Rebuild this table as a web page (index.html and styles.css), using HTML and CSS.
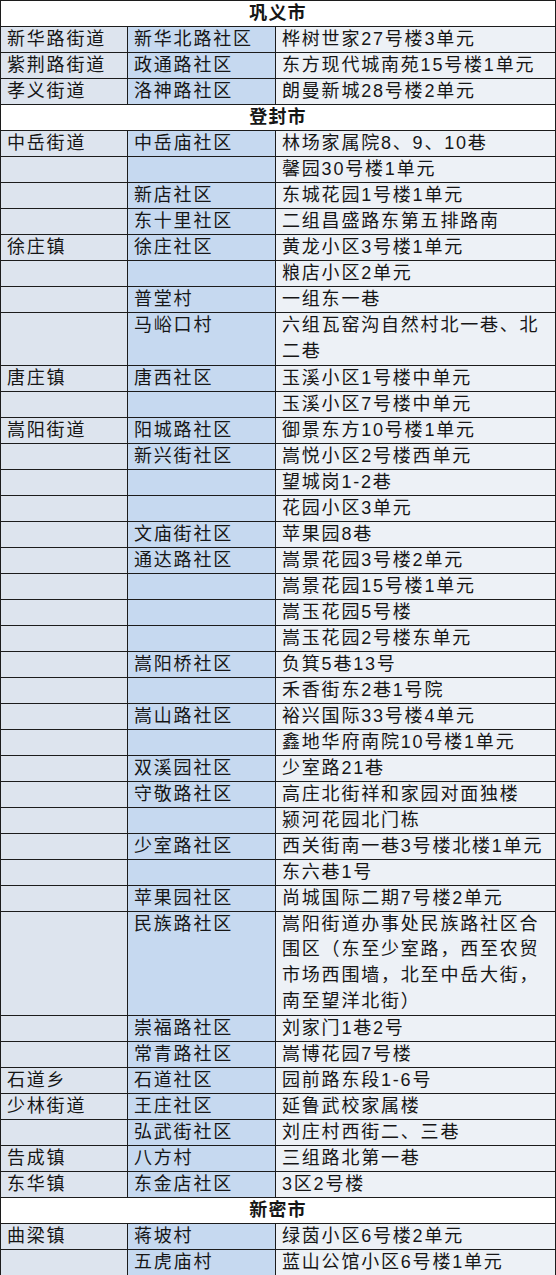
FILE: index.html
```html
<!DOCTYPE html>
<html lang="zh-CN">
<head>
<meta charset="utf-8">
<title>社区名单</title>
<link rel="stylesheet" href="styles.css">
</head>
<body>
<div class="sheet">
  <div class="city">巩义市</div>
  <div class="c1">新华路街道</div><div class="c2">新华北路社区</div><div class="c3">桦树世家27号楼3单元</div>
  <div class="c1">紫荆路街道</div><div class="c2">政通路社区</div><div class="c3">东方现代城南苑15号楼1单元</div>
  <div class="c1">孝义街道</div><div class="c2">洛神路社区</div><div class="c3">朗曼新城28号楼2单元</div>

  <div class="city">登封市</div>
  <div class="c1">中岳街道</div><div class="c2">中岳庙社区</div><div class="c3">林场家属院8、9、10巷</div>
  <div class="c1"></div><div class="c2"></div><div class="c3">馨园30号楼1单元</div>
  <div class="c1"></div><div class="c2">新店社区</div><div class="c3">东城花园1号楼1单元</div>
  <div class="c1"></div><div class="c2">东十里社区</div><div class="c3">二组昌盛路东第五排路南</div>
  <div class="c1">徐庄镇</div><div class="c2">徐庄社区</div><div class="c3">黄龙小区3号楼1单元</div>
  <div class="c1"></div><div class="c2"></div><div class="c3">粮店小区2单元</div>
  <div class="c1"></div><div class="c2">普堂村</div><div class="c3">一组东一巷</div>
  <div class="c1"></div><div class="c2">马峪口村</div><div class="c3 multi">六组瓦窑沟自然村北一巷、北二巷</div>
  <div class="c1">唐庄镇</div><div class="c2">唐西社区</div><div class="c3">玉溪小区1号楼中单元</div>
  <div class="c1"></div><div class="c2"></div><div class="c3">玉溪小区7号楼中单元</div>
  <div class="c1">嵩阳街道</div><div class="c2">阳城路社区</div><div class="c3">御景东方10号楼1单元</div>
  <div class="c1"></div><div class="c2">新兴街社区</div><div class="c3">嵩悦小区2号楼西单元</div>
  <div class="c1"></div><div class="c2"></div><div class="c3">望城岗1-2巷</div>
  <div class="c1"></div><div class="c2"></div><div class="c3">花园小区3单元</div>
  <div class="c1"></div><div class="c2">文庙街社区</div><div class="c3">苹果园8巷</div>
  <div class="c1"></div><div class="c2">通达路社区</div><div class="c3">嵩景花园3号楼2单元</div>
  <div class="c1"></div><div class="c2"></div><div class="c3">嵩景花园15号楼1单元</div>
  <div class="c1"></div><div class="c2"></div><div class="c3">嵩玉花园5号楼</div>
  <div class="c1"></div><div class="c2"></div><div class="c3">嵩玉花园2号楼东单元</div>
  <div class="c1"></div><div class="c2">嵩阳桥社区</div><div class="c3">负箕5巷13号</div>
  <div class="c1"></div><div class="c2"></div><div class="c3">禾香街东2巷1号院</div>
  <div class="c1"></div><div class="c2">嵩山路社区</div><div class="c3">裕兴国际33号楼4单元</div>
  <div class="c1"></div><div class="c2"></div><div class="c3">鑫地华府南院10号楼1单元</div>
  <div class="c1"></div><div class="c2">双溪园社区</div><div class="c3">少室路21巷</div>
  <div class="c1"></div><div class="c2">守敬路社区</div><div class="c3">高庄北街祥和家园对面独楼</div>
  <div class="c1"></div><div class="c2"></div><div class="c3">颍河花园北门栋</div>
  <div class="c1"></div><div class="c2">少室路社区</div><div class="c3">西关街南一巷3号楼北楼1单元</div>
  <div class="c1"></div><div class="c2"></div><div class="c3">东六巷1号</div>
  <div class="c1"></div><div class="c2">苹果园社区</div><div class="c3">尚城国际二期7号楼2单元</div>
  <div class="c1"></div><div class="c2">民族路社区</div><div class="c3 multi">嵩阳街道办事处民族路社区合围区（东至少室路，西至农贸市场西围墙，北至中岳大街，南至望洋北街）</div>
  <div class="c1"></div><div class="c2">崇福路社区</div><div class="c3">刘家门1巷2号</div>
  <div class="c1"></div><div class="c2">常青路社区</div><div class="c3">嵩博花园7号楼</div>
  <div class="c1">石道乡</div><div class="c2">石道社区</div><div class="c3">园前路东段1-6号</div>
  <div class="c1">少林街道</div><div class="c2">王庄社区</div><div class="c3">延鲁武校家属楼</div>
  <div class="c1"></div><div class="c2">弘武街社区</div><div class="c3">刘庄村西街二、三巷</div>
  <div class="c1">告成镇</div><div class="c2">八方村</div><div class="c3">三组路北第一巷</div>
  <div class="c1">东华镇</div><div class="c2">东金店社区</div><div class="c3">3区2号楼</div>

  <div class="city">新密市</div>
  <div class="c1">曲梁镇</div><div class="c2">蒋坡村</div><div class="c3">绿茵小区6号楼2单元</div>
  <div class="c1"></div><div class="c2">五虎庙村</div><div class="c3">蓝山公馆小区6号楼1单元</div>
</div>
</body>
</html>
```

FILE: styles.css
```css
html, body {
  margin: 0;
  padding: 0;
  background: #ffffff;
}

.sheet {
  width: 556px;
  box-sizing: border-box;
  display: grid;
  grid-template-columns: 127px 148px 280px;
  border-top: 1px solid #1c1c1c;
  border-left: 1px solid #1c1c1c;
  font-family: "Liberation Sans", "Noto Sans CJK SC", sans-serif;
  font-size: 18px;
  letter-spacing: 1.8px;
  color: #161616;
}

.sheet > div {
  box-sizing: border-box;
  border-right: 1px solid #1c1c1c;
  border-bottom: 1px solid #1c1c1c;
  line-height: 25px;
  min-height: 26px;
  padding: 0 3px 0 6px;
  white-space: normal;
  overflow-wrap: anywhere;
}

.sheet > .city {
  grid-column: 1 / -1;
  background: #ffffff;
  text-align: center;
  font-weight: 700;
  letter-spacing: 1.2px;
  padding: 0;
}

.sheet > .c1 {
  background: #dde4ee;
}

.sheet > .c2 {
  background: #c6d9f0;
}

.sheet > .c3 {
  background: #edf1f6;
}

.sheet > .multi {
  line-height: 25.75px;
}
```
